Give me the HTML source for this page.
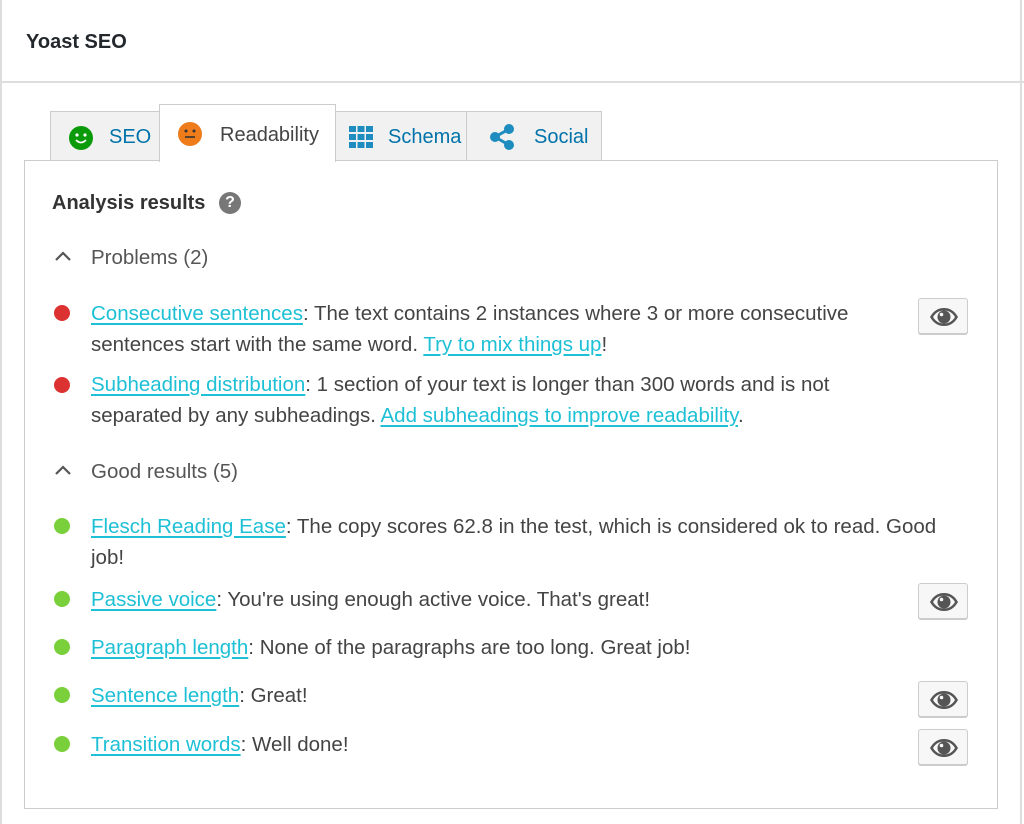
<!DOCTYPE html>
<html><head><meta charset="utf-8"><style>
body{margin:0;width:1024px;height:824px;background:#fff;font-family:"Liberation Sans",sans-serif;color:#444;position:relative;overflow:hidden}
.a{position:absolute;white-space:nowrap}
.t{font-size:20.5px;line-height:24px}
a{color:#1ec0d6;text-decoration:underline;text-underline-offset:3px}
.dot{position:absolute;width:16px;height:16px;border-radius:50%}
.r{background:#dc3232}.g{background:#7ad03a}
.eye{position:absolute;left:918px;width:50px;height:36px;background:#f7f7f7;border:1px solid #ccc;border-radius:3px;box-shadow:0 1px 0 #ccc;box-sizing:border-box}
.tab{position:absolute;top:111px;height:49px;background:#f1f1f1;border:1px solid #ccc;border-bottom:none;box-sizing:border-box;font-size:20px;color:#0073aa}
</style></head><body>
<div style="position:absolute;left:0;top:0;width:1022px;height:824px;border-left:2px solid #ddd;border-right:2px solid #ddd;box-sizing:border-box"></div>
<div style="position:absolute;left:0;top:81px;width:1024px;height:2px;background:#ddd"></div>
<div class="a" style="left:26px;top:31px;font-size:20px;font-weight:bold;color:#23282d">Yoast SEO</div>
<div style="position:absolute;left:24px;top:160px;width:974px;height:649px;border:1px solid #ccc;box-sizing:border-box"></div>
<div class="tab" style="left:50px;width:110px"><svg class="a" style="left:17px;top:13px" width="26" height="26" viewBox="0 0 26 26"><circle cx="13" cy="13" r="12" fill="#0a9a0a"/><circle cx="9" cy="10" r="1.6" fill="#fff"/><circle cx="17" cy="10" r="1.6" fill="#fff"/><path d="M8 15Q13 20 18 15" stroke="#fff" stroke-width="1.6" fill="none"/></svg><span class="a" style="left:58px;top:14px">SEO</span></div>
<div class="tab" style="left:159px;top:104px;width:177px;height:58px;background:#fff;color:#444"><svg class="a" style="left:17px;top:16px" width="26" height="26" viewBox="0 0 26 26"><circle cx="13" cy="13" r="12" fill="#ee7c1b"/><circle cx="9" cy="10" r="1.5" fill="#333"/><circle cx="17" cy="10" r="1.5" fill="#333"/><path d="M8 16H18" stroke="#333" stroke-width="1.6"/></svg><span class="a" style="left:60px;top:19px">Readability</span></div>
<div class="tab" style="left:335px;width:132px"><svg class="a" style="left:13px;top:14px" width="24" height="22" viewBox="0 0 24 22" fill="#1e8cbe"><rect x="0" y="0" width="7" height="6"/><rect x="8.5" y="0" width="7" height="6"/><rect x="17" y="0" width="7" height="6"/><rect x="0" y="8" width="7" height="6"/><rect x="8.5" y="8" width="7" height="6"/><rect x="17" y="8" width="7" height="6"/><rect x="0" y="16" width="7" height="6"/><rect x="8.5" y="16" width="7" height="6"/><rect x="17" y="16" width="7" height="6"/></svg><span class="a" style="left:52px;top:14px">Schema</span></div>
<div class="tab" style="left:466px;width:136px"><svg class="a" style="left:22px;top:12px" width="26" height="26" viewBox="0 0 26 26"><g fill="#1e8cbe" stroke="#1e8cbe" stroke-width="3"><circle cx="20" cy="5" r="3.5"/><circle cx="6" cy="13" r="3.5"/><circle cx="20" cy="21" r="3.5"/><path d="M20 5L6 13L20 21" fill="none"/></g></svg><span class="a" style="left:67px;top:14px">Social</span></div>
<div class="a" style="left:52px;top:192px;font-size:20px;font-weight:bold;color:#333">Analysis results</div>
<div class="dot" style="left:219px;top:192px;width:22px;height:22px;background:#777;color:#fff;font-weight:bold;font-size:16px;text-align:center;line-height:22px">?</div>
<svg class="a" style="left:54px;top:250px" width="18" height="12"><path d="M2 10L9 3L16 10" stroke="#555" stroke-width="2.2" fill="none"/></svg>
<div class="a t" style="left:91px;top:246px;color:#555">Problems (2)</div>
<div class="dot r" style="left:54px;top:305px"></div>
<div class="a t" style="left:91px;top:302px"><a>Consecutive sentences</a>: The text contains 2 instances where 3 or more consecutive</div>
<div class="a t" style="left:91px;top:333px">sentences start with the same word. <a>Try to mix things up</a>!</div>
<div class="dot r" style="left:54px;top:377px"></div>
<div class="a t" style="left:91px;top:373px"><a>Subheading distribution</a>: 1 section of your text is longer than 300 words and is not</div>
<div class="a t" style="left:91px;top:404px">separated by any subheadings. <a>Add subheadings to improve readability</a>.</div>
<svg class="a" style="left:54px;top:464px" width="18" height="12"><path d="M2 10L9 3L16 10" stroke="#555" stroke-width="2.2" fill="none"/></svg>
<div class="a t" style="left:91px;top:460px;color:#555">Good results (5)</div>
<div class="dot g" style="left:54px;top:518px"></div>
<div class="a t" style="left:91px;top:515px"><a>Flesch Reading Ease</a>: The copy scores 62.8 in the test, which is considered ok to read. Good</div>
<div class="a t" style="left:91px;top:546px">job!</div>
<div class="dot g" style="left:54px;top:591px"></div>
<div class="a t" style="left:91px;top:588px"><a>Passive voice</a>: You're using enough active voice. That's great!</div>
<div class="dot g" style="left:54px;top:639px"></div>
<div class="a t" style="left:91px;top:636px"><a>Paragraph length</a>: None of the paragraphs are too long. Great job!</div>
<div class="dot g" style="left:54px;top:687px"></div>
<div class="a t" style="left:91px;top:684px"><a>Sentence length</a>: Great!</div>
<div class="dot g" style="left:54px;top:736px"></div>
<div class="a t" style="left:91px;top:733px"><a>Transition words</a>: Well done!</div>
<svg width="0" height="0" style="position:absolute"><defs><g id="e"><path d="M11 18C15 11 20 9 25 9C30 9 35 11 39 18C35 25 30 27 25 27C20 27 15 25 11 18Z" fill="#555"/><path d="M14 18C17 13 21 11.5 25 11.5C29 11.5 33 13 36 18C33 23 29 24.5 25 24.5C21 24.5 17 23 14 18Z" fill="#f7f7f7"/><circle cx="25" cy="18" r="6.5" fill="#555"/><circle cx="22.5" cy="15.5" r="1.8" fill="#f7f7f7"/></g></defs></svg>
<div class="eye" style="top:298px"><svg width="50" height="36"><use href="#e"/></svg></div>
<div class="eye" style="top:583px"><svg width="50" height="36"><use href="#e"/></svg></div>
<div class="eye" style="top:681px"><svg width="50" height="36"><use href="#e"/></svg></div>
<div class="eye" style="top:729px"><svg width="50" height="36"><use href="#e"/></svg></div>
</body></html>
